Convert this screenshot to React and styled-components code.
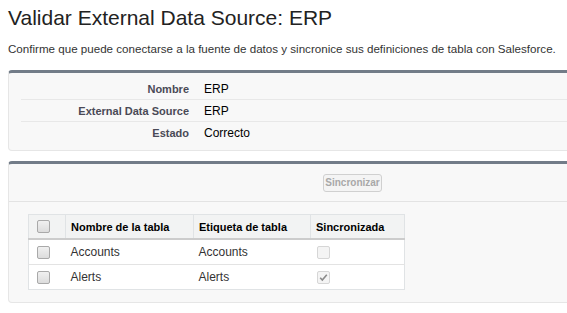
import React from "react";
import styled, { createGlobalStyle } from "styled-components";

const Global = createGlobalStyle`
  html, body { margin: 0; padding: 0; background: #fff; }
  body { font-family: Arial, "Liberation Sans", sans-serif; color: #222; }
`;

const Page = styled.div`
  padding: 6px 0 0 8px;
  width: 580px;
  overflow: hidden;
`;

const Title = styled.h1`
  margin: 0;
  font-size: 21px;
  font-weight: normal;
  line-height: 24px;
  color: #222;
`;

const Intro = styled.p`
  margin: 11px 0 0 0;
  font-size: 11.6px;
  line-height: 15px;
  color: #333;
  white-space: nowrap;
`;

const Panel = styled.section`
  background: #f8f8f8;
  border: 1px solid #e6e6e6;
  border-top: 3px solid #727c88;
  border-radius: 4px;
  margin-top: ${p => p.$mt}px;
  width: 600px;
`;

const DetailBody = styled.div`
  padding: 5px 0 6px 12px;
`;

const DetailRow = styled.div`
  display: grid;
  grid-template-columns: 168px 1fr;
  column-gap: 15px;
  align-items: center;
  height: 21px;
  border-bottom: 1px solid ${p => (p.$last ? "transparent" : "#e8e8e8")};
`;

const Label = styled.span`
  text-align: right;
  font-size: 11px;
  font-weight: bold;
  color: #4a4a56;
`;

const Value = styled.span`
  font-size: 12px;
  color: #000;
`;

const ButtonBar = styled.div`
  height: 37px;
  border-bottom: 1px solid #e3e3e3;
  display: flex;
  align-items: center;
  padding-left: 314px;
`;

const Button = styled.button`
  font-family: Arial, "Liberation Sans", sans-serif;
  font-size: 10px;
  font-weight: bold;
  color: #a8a8a8;
  background: #f4f4f4;
  border: 1px solid #d0d0d0;
  border-radius: 3px;
  height: 18px;
  width: 59px;
  padding: 0;
`;

const TableWrap = styled.div`
  padding: 12px 0 12px 19px;
`;

const Table = styled.table`
  border-collapse: collapse;
  table-layout: fixed;
  background: #fff;
  border: 1px solid #e0e3e5;
  width: 376px;
`;

const Col = styled.col`
  width: ${p => p.$w}px;
`;

const Th = styled.th`
  background: #f2f3f3;
  height: 23px;
  text-align: left;
  font-size: 11px;
  font-weight: bold;
  color: #000;
  padding: 0 5px;
  border-left: 1px solid #e0e3e5;
  border-bottom: 2px solid #cccccc;
  &:first-child { border-left: none; padding-left: 8px; }
`;

const Td = styled.td`
  height: 24px;
  font-size: 12px;
  color: #333;
  padding: 0 5px;
  border-top: 1px solid #e3e3e3;
  &:first-child { padding-left: 8px; }
  &:last-child { padding-left: 6px; }
`;

const Box = styled.span`
  display: inline-block;
  vertical-align: middle;
  width: 11px;
  height: 11px;
  border: 1px solid ${p => (p.$disabled ? "#d6d6d6" : "#a9a9a9")};
  border-radius: 2px;
  background: ${p => (p.$disabled ? "#f4f4f4" : "linear-gradient(#f0f0f0, #dcdcdc)")};
  position: relative;
`;

const Check = () => (
  <svg width="11" height="11" viewBox="0 0 11 11" style={{ position: "absolute", left: 0, top: 0 }}>
    <path d="M2.2 5.8 L4.3 8 L8.8 2.8" fill="none" stroke="#8a8a8a" strokeWidth="1.6" />
  </svg>
);

const Checkbox = ({ disabled, checked }) => (
  <Box $disabled={disabled}>{checked && <Check />}</Box>
);

const rows = [
  { name: "Accounts", label: "Accounts", synced: false },
  { name: "Alerts", label: "Alerts", synced: true },
];

export default function App() {
  return (
    <>
      <Global />
      <Page>
        <Title>Validar External Data Source: ERP</Title>
        <Intro>
          Confirme que puede conectarse a la fuente de datos y sincronice sus definiciones de tabla con Salesforce.
        </Intro>
        <Panel $mt={14}>
          <DetailBody>
            <DetailRow>
              <Label>Nombre</Label>
              <Value>ERP</Value>
            </DetailRow>
            <DetailRow>
              <Label>External Data Source</Label>
              <Value>ERP</Value>
            </DetailRow>
            <DetailRow $last>
              <Label>Estado</Label>
              <Value>Correcto</Value>
            </DetailRow>
          </DetailBody>
        </Panel>
        <Panel $mt={10}>
          <ButtonBar>
            <Button disabled>Sincronizar</Button>
          </ButtonBar>
          <TableWrap>
            <Table>
              <colgroup>
                <Col $w={37} />
                <Col $w={128} />
                <Col $w={117} />
                <Col $w={94} />
              </colgroup>
              <thead>
                <tr>
                  <Th><Checkbox /></Th>
                  <Th>Nombre de la tabla</Th>
                  <Th>Etiqueta de tabla</Th>
                  <Th>Sincronizada</Th>
                </tr>
              </thead>
              <tbody>
                {rows.map(r => (
                  <tr key={r.name}>
                    <Td><Checkbox /></Td>
                    <Td>{r.name}</Td>
                    <Td>{r.label}</Td>
                    <Td><Checkbox disabled checked={r.synced} /></Td>
                  </tr>
                ))}
              </tbody>
            </Table>
          </TableWrap>
        </Panel>
      </Page>
    </>
  );
}
